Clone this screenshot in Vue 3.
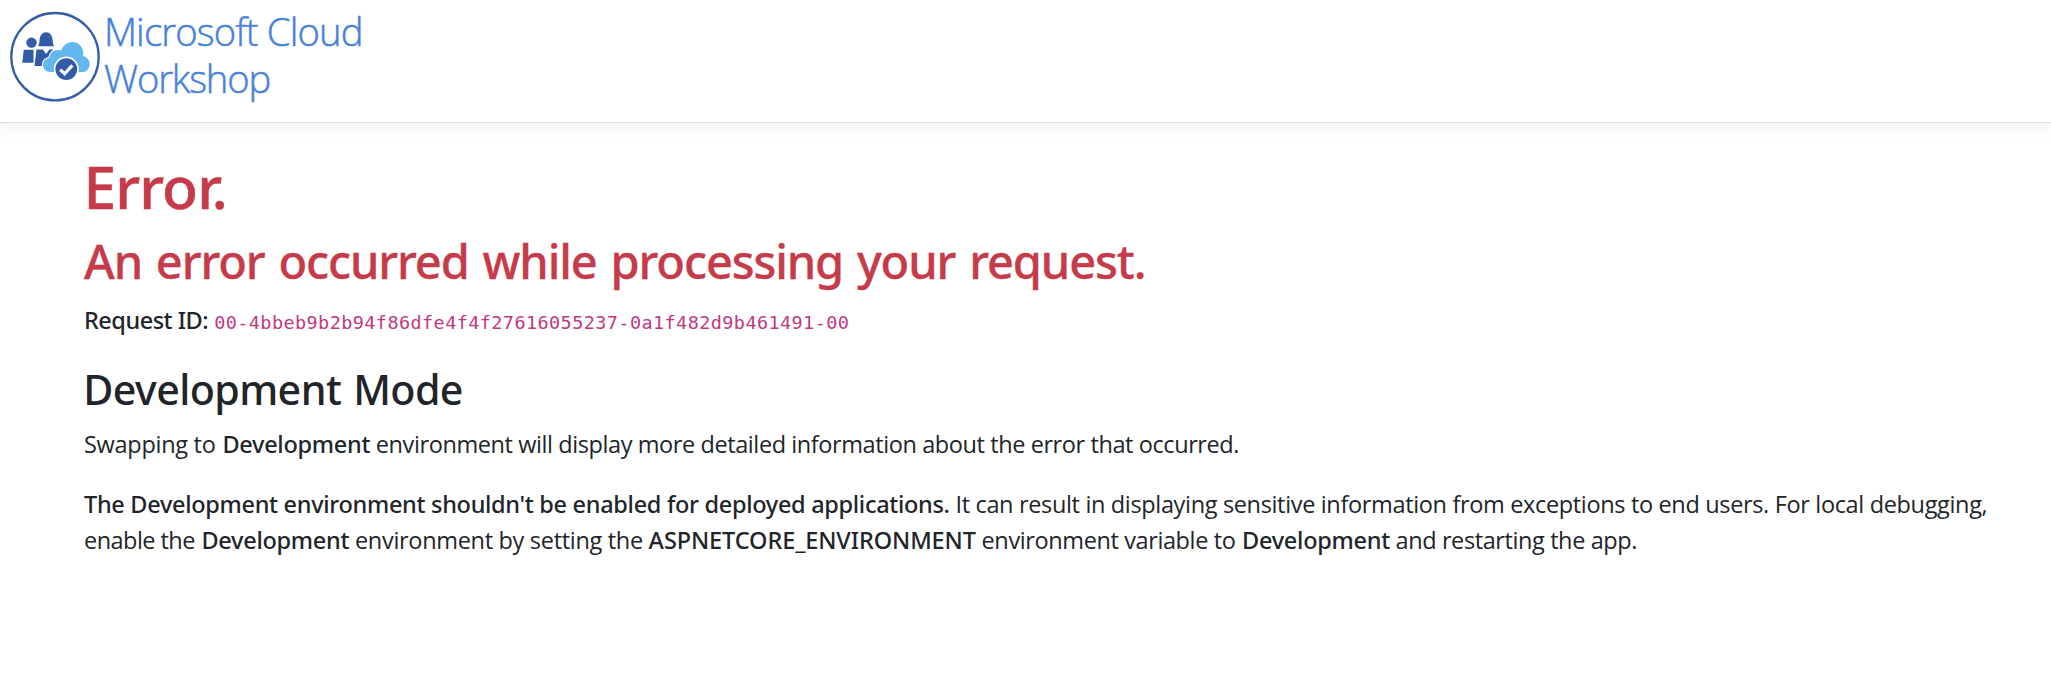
<script setup>
const requestId = '00-4bbeb9b2b94f86dfe4f4f27616055237-0a1f482d9b461491-00'
</script>

<template>
  <div class="page">
    <header class="navbar">
      <svg class="logo" viewBox="0 0 92 92" aria-hidden="true">
        <circle cx="46" cy="46.7" r="43.7" fill="#fff" stroke="#365fa8" stroke-width="2.3" />
        <g fill="#325ca8">
          <circle cx="22.5" cy="32.6" r="5.2" />
          <path d="M14.7 39.7H24.5v13H13.3z" />
          <path d="M29 36.3c1-1 1.3-3 1.5-6 .4-5 2.700-8 6.600-8s6.200 3 6.600 8c.2 3 .5 5 1.500 6z" />
          <path d="M27.500 39.500h6.500l3 4.500 3.500-4.500H44l-9 16.500H25.500z" />
        </g>
        <path
          class="cloud-edge"
          d="M43 62h-1.500c-4.200 0-7.500-3.100-7.500-7 0-3.700 2.700-6.500 6.300-7 .4-4.500 4.100-8 8.700-8 1.200 0 2.300.2 3.300.6C54 35.500 58 32 63 32c6.300 0 11.300 4.800 11.300 11.200 0 1-.1 2-.3 2.900 3.900.9 6.700 4.200 6.700 8.100 0 4.300-3.300 7.800-7.600 7.800z"
        />
        <path
          class="cloud"
          d="M43 62h-1.500c-4.200 0-7.500-3.100-7.500-7 0-3.700 2.700-6.500 6.300-7 .4-4.500 4.100-8 8.700-8 1.200 0 2.300.2 3.300.6C54 35.500 58 32 63 32c6.300 0 11.300 4.800 11.300 11.200 0 1-.1 2-.3 2.900 3.900.9 6.700 4.200 6.700 8.100 0 4.300-3.300 7.800-7.600 7.800z"
        />
        <circle cx="57.3" cy="59.1" r="11.7" fill="#325ca8" stroke="#fff" stroke-width="1.6" />
        <path d="M51.3 59.6l4.300 4.200 7.700-8.400" fill="none" stroke="#fff" stroke-width="3.2" />
      </svg>
      <div class="brand">
        <div class="brand-top">Microsoft Cloud</div>
        <div class="brand-bottom">Workshop</div>
      </div>
    </header>

    <main class="content">
      <h1>Error.</h1>
      <h2>An error occurred while processing your request.</h2>
      <p class="request"><strong>Request ID:</strong><code>{{ requestId }}</code></p>

      <h3>Development Mode</h3>
      <p>
        <span class="t1">Swapping to </span><strong class="dev">Development</strong><span class="t2"> environment will display more detailed information about the error that occurred.</span>
      </p>
      <p>
        <strong class="warn">The Development environment shouldn't be enabled for deployed applications.</strong><span class="t3"> It can result in displaying sensitive information from exceptions to end users. For local debugging,</span><br />
        <span class="t4">enable the </span><strong class="dev">Development</strong><span class="t5"> environment by setting the </span><strong class="var">ASPNETCORE_ENVIRONMENT</strong><span class="t6"> environment variable to </span><strong class="dev">Development</strong><span class="t7"> and restarting the app.</span>
      </p>
    </main>
  </div>
</template>

<style>
body {
  margin: 0;
  background: #fff;
}
</style>

<style scoped>
.page {
  min-height: 676px;
  background: #fff;
  color: #212529;
  font: 400 23.5px/36px "Open Sans", "Noto Sans", sans-serif;
}

.navbar {
  box-sizing: border-box;
  display: flex;
  align-items: flex-start;
  height: 123px;
  padding: 8px 0 0 9px;
  border-bottom: 1px solid #dedfe0;
  box-shadow: 0 6px 18px rgba(0, 0, 0, 0.05);
}

.logo {
  flex: none;
  width: 92px;
  height: 92px;
  margin-top: 2px;
}

.cloud {
  fill: #62b8ee;
}

.cloud-edge {
  fill: #fff;
  stroke: #fff;
  stroke-width: 2.4;
}

.brand {
  margin-left: 3px;
  color: #4781db;
  font-size: 38.2px;
  font-weight: 300;
  line-height: 47px;
  white-space: nowrap;
  -webkit-text-stroke: 0.5px #4781db;
}

.brand-top {
  letter-spacing: -0.85px;
}

.brand-bottom {
  letter-spacing: -1.15px;
}

.content {
  padding: 26.5px 0 0 84px;
  white-space: nowrap;
}

h1,
h2,
h3 {
  font-family: "Noto Sans", sans-serif;
  font-weight: 500;
}

h1 {
  margin: 0 0 11.5px -0.5px;
  color: #c63b49;
  font-size: 58.8px;
  line-height: 72px;
  letter-spacing: -0.9px;
  -webkit-text-stroke: 0.5px #c63b49;
}

h2 {
  margin: 0 0 11.4px;
  color: #c63b49;
  font-size: 47px;
  line-height: 57.6px;
  letter-spacing: -1.12px;
  word-spacing: 2.7px;
  -webkit-text-stroke: 0.3px #c63b49;
}

h3 {
  margin: 0 0 11.6px -0.7px;
  font-size: 41.2px;
  line-height: 50.4px;
  letter-spacing: -0.6px;
  word-spacing: 2px;
}

p {
  margin: 0 0 24px;
}

strong {
  font-family: "Noto Sans", sans-serif;
  font-weight: 500;
}

.request {
  display: flex;
  align-items: baseline;
  height: 36px;
  margin-bottom: 25.6px;
}

.request strong {
  letter-spacing: -0.49px;
}

code {
  margin-left: 6px;
  color: #c0387f;
  font-family: "DejaVu Sans Mono", monospace;
  font-size: 18.5px;
  letter-spacing: 0.41px;
}

.t1 { letter-spacing: -0.28px; }
.t2 { letter-spacing: -0.41px; }
.t3 { letter-spacing: -0.343px; }
.t4 { letter-spacing: -0.54px; }
.t5 { letter-spacing: -0.31px; }
.t6 { letter-spacing: -0.39px; }
.t7 { letter-spacing: -0.4px; }
.dev { margin-left: 1px; letter-spacing: -0.28px; }
.warn { letter-spacing: -0.305px; }
.var { letter-spacing: -0.1px; }
</style>
